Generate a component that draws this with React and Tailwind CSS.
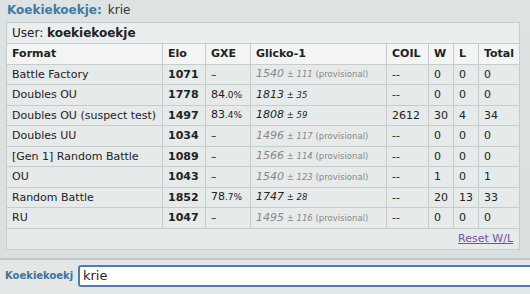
import React from "react";

const rows = [
  { format: "Battle Factory", elo: 1071, gxe: null, r: 1540, d: 111, prov: true, coil: "--", w: 0, l: 0, t: 0 },
  { format: "Doubles OU", elo: 1778, gxe: ["84", ".0%"], r: 1813, d: 35, prov: false, coil: "--", w: 0, l: 0, t: 0 },
  { format: "Doubles OU (suspect test)", elo: 1497, gxe: ["83", ".4%"], r: 1808, d: 59, prov: false, coil: "2612", w: 30, l: 4, t: 34 },
  { format: "Doubles UU", elo: 1034, gxe: null, r: 1496, d: 117, prov: true, coil: "--", w: 0, l: 0, t: 0 },
  { format: "[Gen 1] Random Battle", elo: 1089, gxe: null, r: 1566, d: 114, prov: true, coil: "--", w: 0, l: 0, t: 0 },
  { format: "OU", elo: 1043, gxe: null, r: 1540, d: 123, prov: true, coil: "--", w: 1, l: 0, t: 1 },
  { format: "Random Battle", elo: 1852, gxe: ["78", ".7%"], r: 1747, d: 28, prov: false, coil: "--", w: 20, l: 13, t: 33 },
  { format: "RU", elo: 1047, gxe: null, r: 1495, d: 116, prov: true, coil: "--", w: 0, l: 0, t: 0 },
];

const cell = "border border-[#c6cbcb] px-[5px] py-0 text-left align-middle whitespace-nowrap";

export default function App() {
  return (
    <div
      className="w-[530px] h-[294px] overflow-hidden flex flex-col bg-gradient-to-b from-[#dde3e3] to-[#d9dfdf] text-[#222]"
      style={{ fontFamily: "Verdana, 'DejaVu Sans', sans-serif" }}
    >
      {/* Header */}
      <div className="h-[22px] pl-[7px] pt-[2px] text-[12px] leading-[16px]">
        <span className="font-bold text-[#4379a2]">Koekiekoekje:</span>
        <span className="ml-[6px] text-[#333]">krie</span>
      </div>

      {/* Ladder panel */}
      <div className="ml-[6px] w-[513px]">
        <table className="w-[513px] table-fixed border-collapse text-[11px] leading-[13px] bg-[#e6eaea]">
          <colgroup>
            <col className="w-[156px]" />
            <col className="w-[43px]" />
            <col className="w-[45px]" />
            <col className="w-[136px]" />
            <col className="w-[42px]" />
            <col className="w-[25px]" />
            <col className="w-[25px]" />
            <col className="w-[41px]" />
          </colgroup>
          <tbody>
            <tr className="h-[21px] bg-[#eaeeee]">
              <td colSpan={8} className={cell + " text-[12px]"}>
                User: <strong>koekiekoekje</strong>
              </td>
            </tr>
            <tr className="h-[20.5px] bg-[#f3f4f4] font-bold">
              <th className={cell}>Format</th>
              <th className={cell}>Elo</th>
              <th className={cell}>GXE</th>
              <th className={cell}>Glicko-1</th>
              <th className={cell}>COIL</th>
              <th className={cell}>W</th>
              <th className={cell}>L</th>
              <th className={cell}>Total</th>
            </tr>
            {rows.map((row) => (
              <tr key={row.format} className="h-[20.5px]">
                <td className={cell}>{row.format}</td>
                <td className={cell + " font-bold"}>{row.elo}</td>
                <td className={cell}>
                  {row.gxe ? (
                    <>
                      {row.gxe[0]}
                      <span className="text-[9px]">{row.gxe[1]}</span>
                    </>
                  ) : (
                    "–"
                  )}
                </td>
                <td className={cell}>
                  <em className={row.prov ? "text-[#888]" : "text-[#222]"}>
                    {row.r}
                    <span className="text-[8.5px]"> ± {row.d}</span>
                  </em>
                  {row.prov && <span className="text-[8.5px] text-[#888]"> (provisional)</span>}
                </td>
                <td className={cell}>{row.coil}</td>
                <td className={cell}>{row.w}</td>
                <td className={cell}>{row.l}</td>
                <td className={cell}>{row.t}</td>
              </tr>
            ))}
            <tr className="h-[21px]">
              <td colSpan={8} className={cell + " text-right"}>
                <a href="#" className="text-[#7a4fa6] underline pr-[1px]">
                  Reset W/L
                </a>
              </td>
            </tr>
          </tbody>
        </table>
      </div>

      {/* Command bar */}
      <div className="mt-[8px] flex-1 border-t-2 border-[#c3c8c8] bg-[#e3e7e7] flex items-center pb-[2px]">
        <span className="pl-[5px] w-[78px] shrink-0 text-[10px] font-bold text-[#3c75a0]">Koekiekoekj</span>
        <div className="flex-1 -mr-[10px] h-[22px] bg-white border-2 border-[#4c7eb3] rounded-[3px] flex items-center pl-[3px] text-[13px] text-[#3a1a1a]">
          krie
        </div>
      </div>
    </div>
  );
}
